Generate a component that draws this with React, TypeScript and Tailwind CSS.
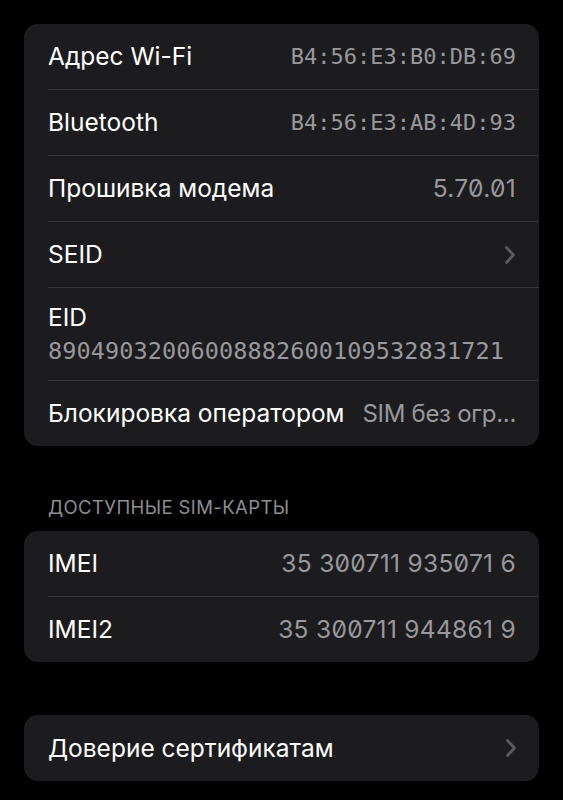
import React from "react";

type Row = {
  label: string;
  value?: string;
  mono?: boolean;
  chevron?: boolean;
  valueClass?: string;
};

const Chevron = () => (
  <svg width="12" height="20" viewBox="0 0 12 20" fill="none" className="shrink-0">
    <path d="M2.5 2.5L9.5 10L2.5 17.5" stroke="#5b5b5f" strokeWidth="2.8" strokeLinecap="round" strokeLinejoin="round" />
  </svg>
);

const SettingRow = ({ label, value, mono, chevron, valueClass, last }: Row & { last?: boolean }) => (
  <div className="pl-[24px]">
    <div
      className={`flex items-center justify-between gap-2 pr-[23px] ${
        last ? "h-[65px]" : "h-[66px] border-b border-[#38383a]"
      }`}
    >
      <span className="shrink-0 whitespace-nowrap text-[24.5px] text-white">{label}</span>
      {value && (
        <span
          className={`shrink-0 whitespace-nowrap text-[#98989d] ${
            mono
              ? "font-['DejaVu_Sans_Mono',monospace] text-[22px]"
              : valueClass ?? "text-[24.5px] tracking-[0.3px] slashed-zero"
          }`}
        >
          {value}
        </span>
      )}
      {chevron && <Chevron />}
    </div>
  </div>
);

const Card = ({ children }: { children: React.ReactNode }) => (
  <div className="mx-[24px] overflow-hidden rounded-[14px] bg-[#1c1c1e]">{children}</div>
);

export default function App() {
  return (
    <div className="min-h-[800px] w-full bg-black pt-[24px] font-['Inter','Noto_Sans',sans-serif]">
      <Card>
        <SettingRow label="Адрес Wi-Fi" value="B4:56:E3:B0:DB:69" mono />
        <SettingRow label="Bluetooth" value="B4:56:E3:AB:4D:93" mono />
        <SettingRow label="Прошивка модема" value="5.70.01" />
        <SettingRow label="SEID" chevron />
        <div className="pl-[24px]">
          <div className="flex h-[93px] flex-col justify-center border-b border-[#38383a] pr-[23px]">
            <span className="text-[24.5px] leading-[30px] text-white">EID</span>
            <span className="mt-[4px] font-['DejaVu_Sans_Mono',monospace] text-[23.5px] leading-[30px] tracking-[0.1px] text-[#98989d]">
              89049032006008882600109532831721
            </span>
          </div>
        </div>
        <SettingRow
          label="Блокировка оператором"
          value="SIM без огр..."
          valueClass="text-[24px] tracking-[-0.3px]"
          last
        />
      </Card>

      <div className="px-[48px] pb-[12px] pt-[50px] text-[18.5px] leading-[23px] tracking-[0.4px] text-[#8d8d93]">
        ДОСТУПНЫЕ SIM-КАРТЫ
      </div>

      <Card>
        <SettingRow label="IMEI" value="35 300711 935071 6" />
        <SettingRow label="IMEI2" value="35 300711 944861 9" last />
      </Card>

      <div className="h-[53px]" />

      <Card>
        <div className="pl-[24px]">
          <div className="flex h-[66px] items-center justify-between pr-[22px]">
            <span className="text-[24.5px] text-white">Доверие сертификатам</span>
            <Chevron />
          </div>
        </div>
      </Card>
    </div>
  );
}
